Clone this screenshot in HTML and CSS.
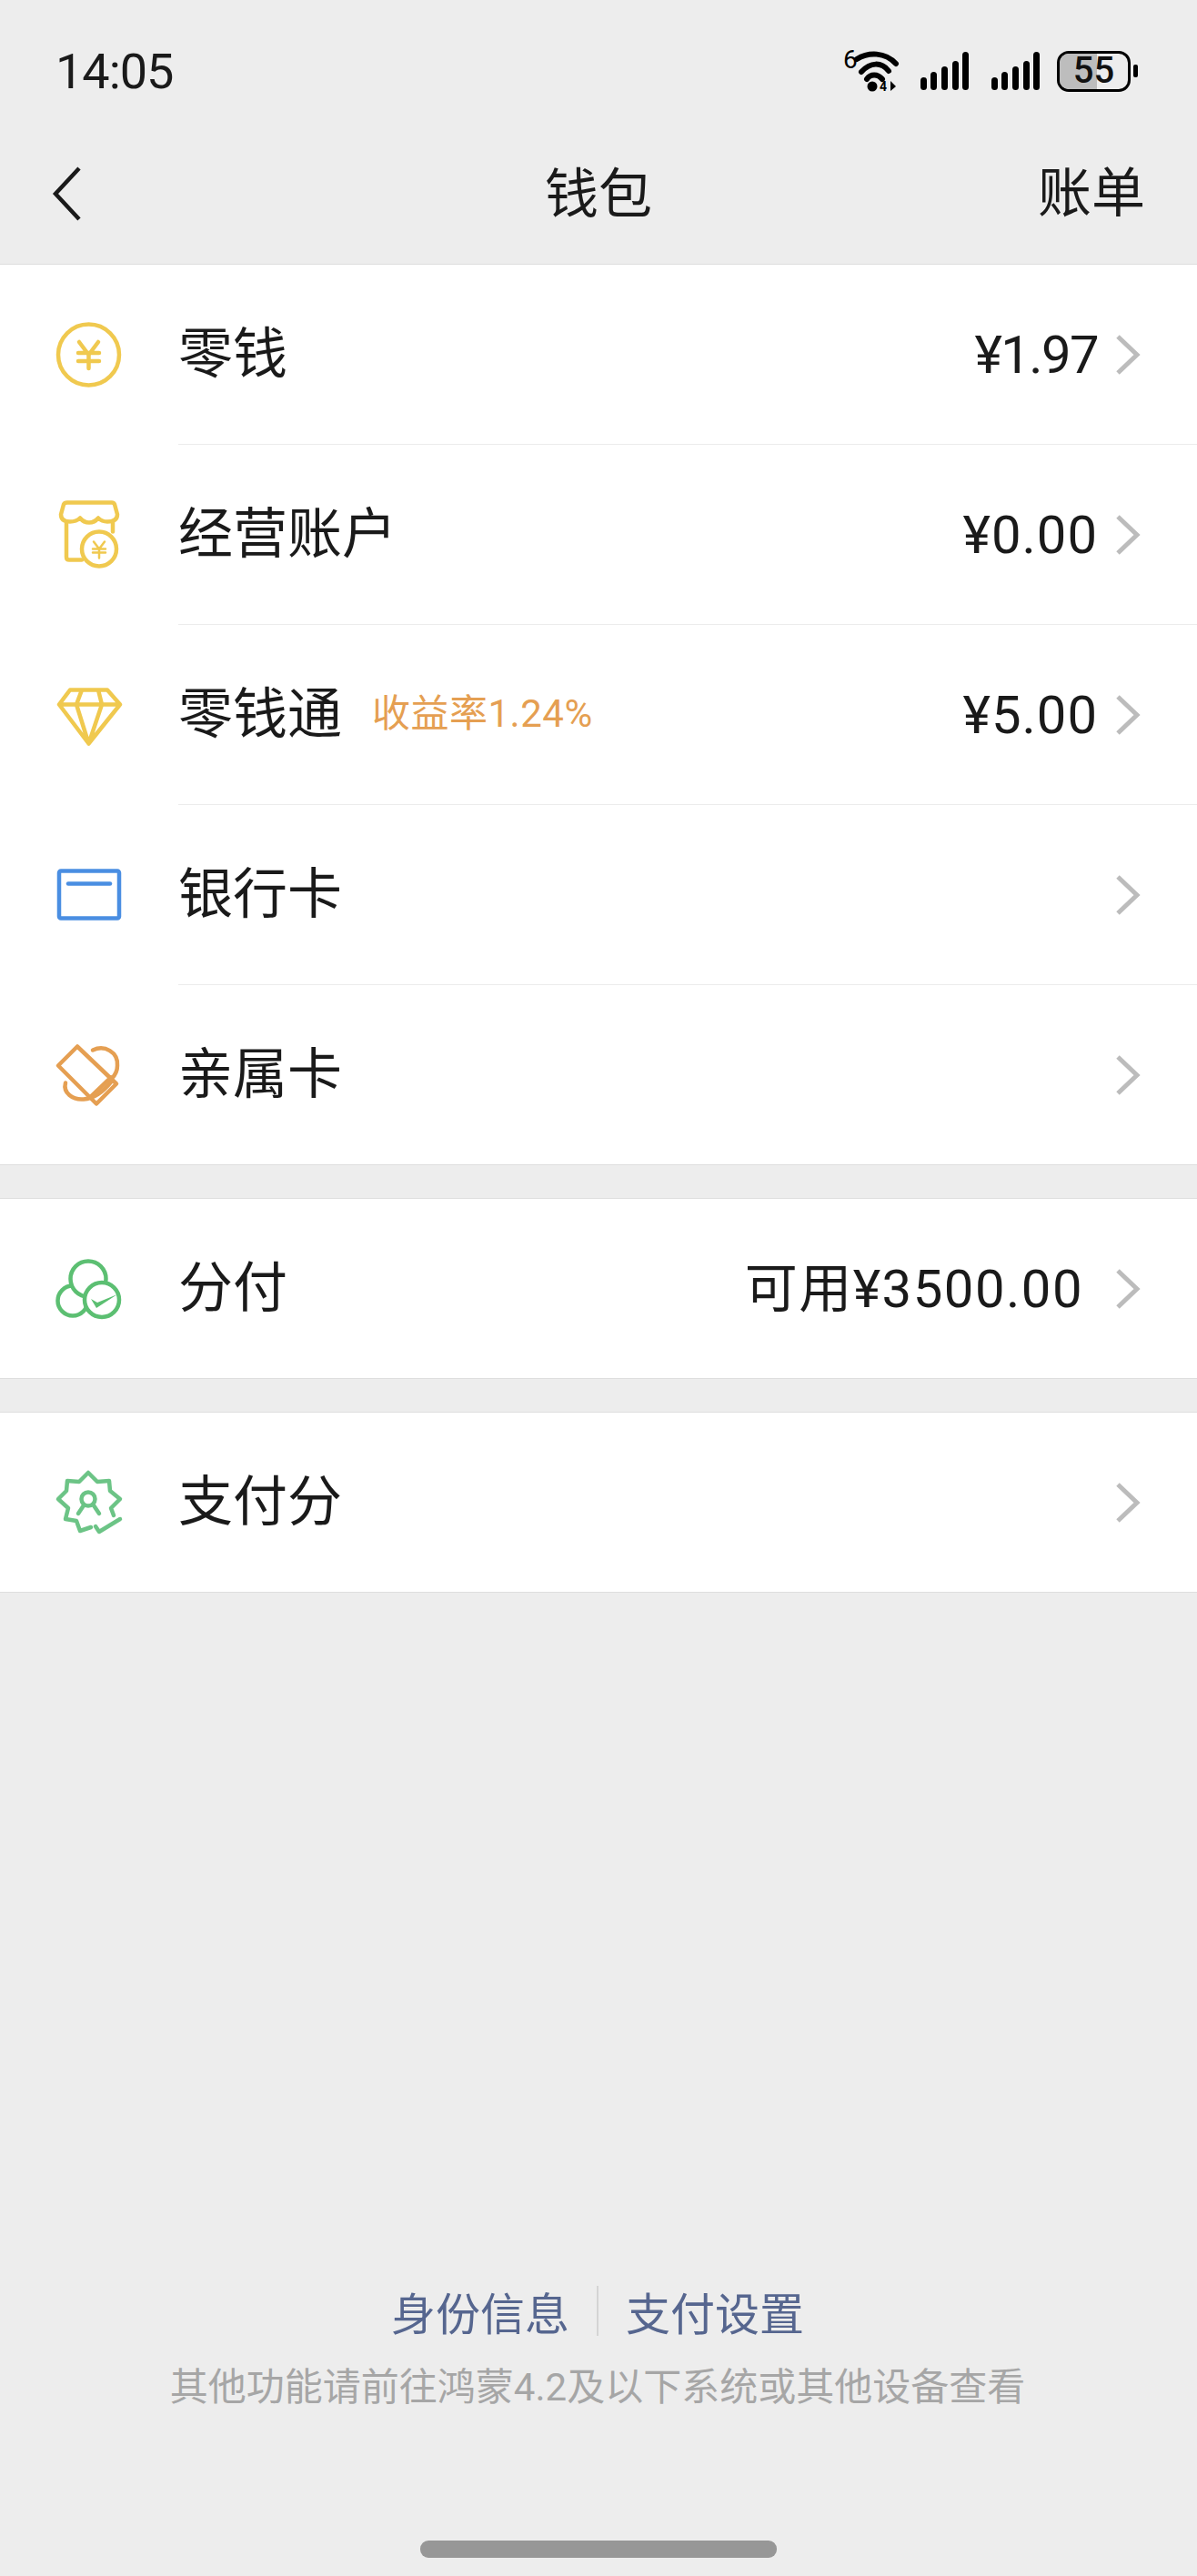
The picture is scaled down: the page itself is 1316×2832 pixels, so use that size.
FILE: index.html
```html
<!DOCTYPE html>
<html lang="zh-CN">
<head>
    <meta charset="UTF-8">
    <meta name="viewport" content="width=device-width, initial-scale=1.0">
    <title>钱包</title>
    <link rel="stylesheet" href="styles.css">
</head>
<body>
<div class="page">

    <div class="statusbar">
        <span class="time">14:05</span>
        <div class="status-icons">
            <svg class="wifi" width="62" height="62" viewBox="0 -7 62 62">
                <text class="wifi-six" x="0" y="21">6</text>
                <path class="wifi-arc" d="M15 11 C28 3 46 3 58 16"/>
                <path class="wifi-arc" d="M20 25 C30 14 42 14 50 24"/>
                <path class="wifi-arc" d="M26 33 C30 27 38 27 43 33"/>
                <circle cx="32" cy="41" r="5.5"/>
                <text class="wifi-four" x="40" y="46">4</text>
                <path d="M52 35 V46 L58 41 Z"/>
            </svg>
            <svg class="signal" width="54" height="43" viewBox="0 0 54 43">
                <rect x="0" y="28" width="7" height="14" rx="3.5"/>
                <rect x="11" y="22" width="7" height="20" rx="3.5"/>
                <rect x="23" y="16" width="7" height="26" rx="3.5"/>
                <rect x="35" y="10" width="7" height="32" rx="3.5"/>
                <rect x="46" y="0" width="7" height="42" rx="3.5"/>
            </svg>
            <svg class="signal" width="54" height="43" viewBox="0 0 54 43">
                <rect x="0" y="28" width="7" height="14" rx="3.5"/>
                <rect x="11" y="22" width="7" height="20" rx="3.5"/>
                <rect x="23" y="16" width="7" height="26" rx="3.5"/>
                <rect x="35" y="10" width="7" height="32" rx="3.5"/>
                <rect x="46" y="0" width="7" height="42" rx="3.5"/>
            </svg>
            <div class="battery">
                <div class="battery-body">
                    <div class="battery-level"></div>
                    <span class="battery-text">55</span>
                </div>
                <div class="battery-tip"></div>
            </div>
        </div>
    </div>

    <nav class="navbar">
        <svg class="back" width="34" height="62" viewBox="0 0 34 62">
            <path d="M30 3 L4 31 L30 59"/>
        </svg>
        <span class="nav-title">钱包</span>
        <a class="nav-action">账单</a>
    </nav>

    <section class="group group-first">
        <div class="row">
            <svg class="icon icon-yellow" viewBox="0 0 120 120">
                <circle cx="57.5" cy="60" r="33.5"/>
                <path d="M47 46 L57.5 60 L68 46 M46 58 H69 M46 67 H69 M57.5 60 V75"/>
            </svg>
            <div class="row-body">
                <span class="row-label">零钱</span>
                <span class="row-value row-value-narrow">¥1.97</span>
                <svg class="chevron" width="30" height="46" viewBox="0 0 30 46"><path d="M4 3 L25 23 L4 43"/></svg>
            </div>
        </div>
        <div class="row">
            <svg class="icon icon-yellow" viewBox="0 0 120 120">
                <g transform="translate(0 2.5)">
                    <path d="M27 36 L30 25 Q31 23 34 23 H83 Q85 23 86 25 L89 36 Q89 44 78 44 Q72 44 68 40 Q64 45 58 45 Q52 45 48 40 Q44 44 37 44 Q27 44 27 36 Z"/>
                    <path d="M33 44 V83 Q33 86 36 86 H50 M84 44 V55"/>
                    <circle cx="69" cy="74" r="19"/>
                    <path class="thin" d="M63 66 L69 74 L75 66 M62 74 H76 M62 78 H76 M69 74 V84"/>
                </g>
            </svg>
            <div class="row-body">
                <span class="row-label">经营账户</span>
                <span class="row-value">¥0.00</span>
                <svg class="chevron" width="30" height="46" viewBox="0 0 30 46"><path d="M4 3 L25 23 L4 43"/></svg>
            </div>
        </div>
        <div class="row">
            <svg class="icon icon-yellow" viewBox="0 0 120 120">
                <g transform="translate(0 4.5)">
                    <path d="M37 29 H78 L92 45 L57.5 88 L25 45 Z M25 45 H92 M50 29 L44 45 L57.5 88 L72 45 L68 29"/>
                </g>
            </svg>
            <div class="row-body">
                <span class="row-label">零钱通</span>
                <span class="row-tag">收益率1.24%</span>
                <span class="row-value">¥5.00</span>
                <svg class="chevron" width="30" height="46" viewBox="0 0 30 46"><path d="M4 3 L25 23 L4 43"/></svg>
            </div>
        </div>
        <div class="row">
            <svg class="icon icon-blue" viewBox="0 0 120 120">
                <g transform="translate(0 1.5)">
                    <rect x="25" y="33" width="66" height="52" rx="2"/>
                    <path d="M35 47 H81"/>
                </g>
            </svg>
            <div class="row-body">
                <span class="row-label">银行卡</span>
                <svg class="chevron" width="30" height="46" viewBox="0 0 30 46"><path d="M4 3 L25 23 L4 43"/></svg>
            </div>
        </div>
        <div class="row">
            <svg class="icon icon-orange" viewBox="0 0 120 120">
                <g transform="translate(0 -1.5)">
                    <path d="M45 31 L24 52 L66 94 L88 72 Z M59 87 L82 65"/>
                    <path d="M62 35 C75 29 90 37 89 52 C89 57 87 62 83 66 M32 71 C29 82 40 90 52 89 C64 88 74 80 82 70"/>
                </g>
            </svg>
            <div class="row-body">
                <span class="row-label">亲属卡</span>
                <svg class="chevron" width="30" height="46" viewBox="0 0 30 46"><path d="M4 3 L25 23 L4 43"/></svg>
            </div>
        </div>
    </section>

    <section class="group">
        <div class="row">
            <svg class="icon icon-green" viewBox="0 0 120 120">
                <g transform="translate(0 4)">
                    <circle cx="40" cy="69" r="16.5"/>
                    <circle cx="57" cy="45" r="19.5"/>
                    <circle cx="72" cy="68" r="19"/>
                    <path class="solid" d="M60 67 L67 71 L89 62 L66 77 Z"/>
                </g>
            </svg>
            <div class="row-body">
                <span class="row-label">分付</span>
                <span class="row-value row-value-wide">可用¥3500.00</span>
                <svg class="chevron" width="30" height="46" viewBox="0 0 30 46"><path d="M4 3 L25 23 L4 43"/></svg>
            </div>
        </div>
    </section>

    <section class="group">
        <div class="row">
            <svg class="icon icon-mint" viewBox="0 0 120 120">
                <g transform="translate(0 4)">
                    <path d="M60 83 L48 87 L44 76 L32 74 L35 62 L24 52 L33 43 L34 32 L47 33 L57 23 L67 33 L80 32 L81 43 L92 52 L82 62 L85 70"/>
                    <circle cx="57" cy="52" r="7.5"/>
                    <path d="M46 68 L52 59 M69 68 L63 59 M65 82 L69 88 L92 74"/>
                </g>
            </svg>
            <div class="row-body">
                <span class="row-label">支付分</span>
                <svg class="chevron" width="30" height="46" viewBox="0 0 30 46"><path d="M4 3 L25 23 L4 43"/></svg>
            </div>
        </div>
    </section>

    <footer class="footer">
        <div class="footer-links">
            <a>身份信息</a>
            <span class="footer-divider"></span>
            <a>支付设置</a>
        </div>
        <p class="footer-note">其他功能请前往鸿蒙4.2及以下系统或其他设备查看</p>
        <div class="home-bar"></div>
    </footer>

</div>
</body>
</html>
```

FILE: styles.css
```css
:root {
    --page-bg: #ededed;
    --line: #dedede;
    --row-line: #ececec;
    --text: #1a1a1a;
    --yellow: #f0c94f;
    --orange: #e59f52;
    --blue: #4a8ee2;
    --green: #5cbf72;
    --mint: #6cc486;
    --link: #56668f;
    --muted: #a6a6a6;
}

body {
    margin: 0;
    background-color: var(--page-bg);
    color: var(--text);
    font-family: Roboto, "Noto Sans CJK SC", sans-serif;
}

.page {
    display: flex;
    flex-direction: column;
    height: 2832px;
    overflow: hidden;
}

/* Status bar */
.statusbar {
    display: flex;
    justify-content: space-between;
    align-items: center;
    height: 156px;
    box-sizing: border-box;
    padding: 0 65px 0 61px;
}

.time {
    font-size: 54px;
    letter-spacing: -1px;
}

.status-icons {
    display: flex;
    align-items: center;
    gap: 24px;
}

.wifi {
    fill: #000;
    margin-right: -1px;
}

.wifi-six {
    font-size: 28px;
    font-family: Roboto, sans-serif;
}

.wifi-four {
    font-size: 14px;
    font-weight: 700;
    font-family: Roboto, sans-serif;
}

.wifi-arc {
    fill: none;
    stroke: #000;
    stroke-width: 6;
    stroke-linecap: round;
}

.signal {
    fill: #000;
}

.battery {
    display: flex;
    align-items: center;
    gap: 3px;
    margin-left: -6px;
}

.battery-body {
    position: relative;
    display: flex;
    justify-content: center;
    align-items: center;
    width: 81px;
    height: 45px;
    box-sizing: border-box;
    border: 3.5px solid #000;
    border-radius: 13px;
    overflow: hidden;
}

.battery-level {
    position: absolute;
    left: 0;
    top: 0;
    bottom: 0;
    width: 55%;
    background-color: #bdbdbd;
}

.battery-text {
    position: relative;
    font-size: 40px;
    font-weight: 500;
    line-height: 1;
    color: #111;
}

.battery-tip {
    width: 5px;
    height: 14px;
    border-radius: 2px;
    background-color: #000;
}

/* Nav */
.navbar {
    display: flex;
    justify-content: space-between;
    align-items: center;
    position: relative;
    height: 135px;
    box-sizing: border-box;
    padding: 0 57px 20px 57px;
    border-bottom: 1px solid var(--line);
}

.back path {
    fill: none;
    stroke: var(--text);
    stroke-width: 4.5;
}

.nav-title {
    position: absolute;
    left: 0;
    right: 0;
    top: 18px;
    text-align: center;
    font-size: 59px;
    line-height: 80px;
}

.nav-action {
    font-size: 59px;
    line-height: 80px;
}

/* Rows */
.group {
    background-color: #fff;
    border-top: 1px solid var(--line);
    border-bottom: 1px solid var(--line);
    margin-bottom: 36px;
}

.group-first {
    border-top: 0;
}

.row {
    display: flex;
    align-items: center;
    padding-left: 40px;
}

.row-body {
    flex: 1;
    display: flex;
    align-items: center;
    height: 197px;
    padding-right: 61px;
}

.row + .row .row-body {
    border-top: 1px solid var(--row-line);
}

.icon {
    flex: none;
    width: 120px;
    height: 120px;
    margin-right: 36px;
    fill: none;
    stroke-width: 4.5;
    stroke-linejoin: round;
    stroke-linecap: round;
}

.icon .thin {
    stroke-width: 2.5;
}

.icon .solid {
    fill: var(--green);
    stroke: none;
}

.icon-yellow { stroke: var(--yellow); }
.icon-orange { stroke: var(--orange); }
.icon-blue { stroke: var(--blue); }
.icon-green { stroke: var(--green); }
.icon-green circle { fill: #fff; }
.icon-mint { stroke: var(--mint); }

.row-label {
    font-size: 60px;
    line-height: 80px;
}

.row-tag {
    margin-left: 33px;
    padding-bottom: 1px;
    font-size: 42px;
    line-height: 60px;
    letter-spacing: 0.5px;
    color: var(--orange);
}

.row-value {
    margin-left: auto;
    font-size: 58px;
    line-height: 80px;
    letter-spacing: 1px;
}

.row-value-narrow {
    letter-spacing: -1.6px;
}

.row-value-wide {
    margin-right: 16px;
    letter-spacing: 1.5px;
}

.chevron {
    flex: none;
    margin-left: 18px;
}

.row-body .chevron:nth-child(2) {
    margin-left: auto;
}

.chevron path {
    fill: none;
    stroke: #bcbcbc;
    stroke-width: 5;
}

/* Footer */
.footer {
    margin-top: auto;
    display: flex;
    flex-direction: column;
    align-items: center;
}

.footer-links {
    display: flex;
    align-items: center;
    gap: 30px;
    height: 56px;
    margin-left: -2px;
    color: var(--link);
    font-size: 49px;
}

.footer-divider {
    width: 2px;
    height: 55px;
    background-color: #d4d4d4;
}

.footer-note {
    margin: 28px 0 0 -2px;
    font-size: 42px;
    line-height: 58px;
    color: var(--muted);
}

.home-bar {
    width: 392px;
    height: 19px;
    margin: 139px 0 20px 0;
    border-radius: 9px;
    background-color: #979797;
}
```
